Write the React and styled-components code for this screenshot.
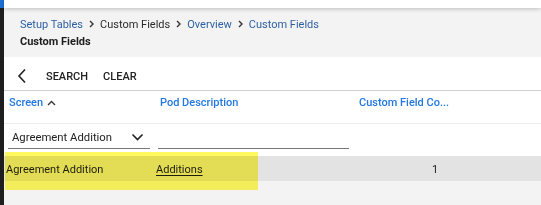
import React from "react";
import styled, { createGlobalStyle } from "styled-components";

const GlobalStyle = createGlobalStyle`
  html, body {
    margin: 0;
    padding: 0;
    background: #f3f3f3;
    font-family: Roboto, "Liberation Sans", sans-serif;
    font-size: 12px;
    color: #222;
  }
  #root { height: 205px; overflow: hidden; }
`;

const Shell = styled.div`
  display: flex;
  height: 205px;
`;

const Rail = styled.div`
  width: 4px;
  flex-shrink: 0;
  background: linear-gradient(#1f6fd6 0 8px, #1e1e1e 8px);
`;

const Main = styled.div`
  flex: 1;
  display: flex;
  flex-direction: column;
  min-width: 0;
`;

const TopBar = styled.div`
  height: 8px;
  background: #fff;
  box-shadow: 0 1px 4px rgba(0, 0, 0, 0.22);
  position: relative;
  z-index: 1;
`;

const Header = styled.div`
  height: 49px;
  padding: 10px 0 0 16px;
  box-sizing: border-box;
  background: #f3f3f3;
`;

const Crumbs = styled.div`
  display: flex;
  align-items: center;
  gap: 6px;
  font-size: 11px;
  line-height: 14px;
`;

const Crumb = styled.span`
  color: ${(p) => (p.$link ? "#2d5fa3" : "#2b2b2b")};
`;

const Sep = styled.svg`
  width: 5px;
  height: 8px;
  margin-top: -3px;
`;

const Title = styled.div`
  margin-top: 3px;
  font-weight: 700;
  font-size: 11px;
  color: #1c1c1c;
`;

const Panel = styled.div`
  background: #fff;
`;

const Toolbar = styled.div`
  height: 34px;
  display: flex;
  align-items: center;
  gap: 15px;
  padding: 5px 0 0 12px;
  box-sizing: border-box;
  border-bottom: 1px solid #cfcfcf;
`;

const Back = styled.svg`
  width: 12px;
  height: 16px;
  margin-right: 3px;
`;

const ToolButton = styled.span`
  font-size: 11px;
  font-weight: 500;
  color: #222;
`;

const Row = styled.div`
  display: grid;
  grid-template-columns: 152px 199px 1fr;
  align-items: ${(p) => p.$align || "center"};
  height: ${(p) => p.$h}px;
  box-sizing: border-box;
  background: ${(p) => p.$bg || "#fff"};
  border-bottom: ${(p) => (p.$line ? "1px solid #ececec" : "none")};
  padding-top: ${(p) => p.$pt || 0}px;
`;

const HeadCell = styled.div`
  color: #2177e3;
  font-weight: 500;
  font-size: 11px;
  padding-left: ${(p) => p.$pl}px;
  display: flex;
  align-items: center;
  gap: 4px;
`;

const Select = styled.div`
  margin: 0 6px 0 4px;
  height: 22px;
  display: flex;
  align-items: center;
  justify-content: space-between;
  padding: 0 6px 0 4px;
  border-bottom: 1px solid #777;
  font-size: 11.3px;
  color: #222;
`;

const Input = styled.div`
  margin: 0 6px 0 2px;
  height: 22px;
  border-bottom: 1px solid #777;
`;

const Gap = styled.div`
  height: 4px;
  background: #fff;
`;

const DataWrap = styled.div`
  position: relative;
`;

const Cell = styled.div`
  font-size: 11px;
  color: #1e1e1e;
  padding: 1px 0 0 ${(p) => p.$pl || 0}px;
  text-decoration: ${(p) => (p.$u ? "underline" : "none")};
  text-underline-offset: 2px;
`;

const Highlight = styled.div`
  position: absolute;
  left: 1px;
  top: -4px;
  width: 253px;
  height: 38px;
  background: #fff95f;
  mix-blend-mode: multiply;
  pointer-events: none;
`;

const Chevron = () => (
  <Sep viewBox="0 0 5 8">
    <path d="M1 1 L4 4 L1 7" fill="none" stroke="#333" strokeWidth="1.4" />
  </Sep>
);

export default function App() {
  return (
    <>
      <GlobalStyle />
      <Shell>
        <Rail />
        <Main>
          <TopBar />
          <Header>
            <Crumbs>
              <Crumb $link>Setup Tables</Crumb>
              <Chevron />
              <Crumb>Custom Fields</Crumb>
              <Chevron />
              <Crumb $link>Overview</Crumb>
              <Chevron />
              <Crumb $link>Custom Fields</Crumb>
            </Crumbs>
            <Title>Custom Fields</Title>
          </Header>
          <Panel>
            <Toolbar>
              <Back viewBox="0 0 12 16">
                <path d="M9 1.5 L3 8 L9 14.5" fill="none" stroke="#222" strokeWidth="1.6" />
              </Back>
              <ToolButton>SEARCH</ToolButton>
              <ToolButton>CLEAR</ToolButton>
            </Toolbar>
            <Row $h={33} $line $align="start" $pt={5}>
              <HeadCell $pl={5}>
                Screen
                <svg width="9" height="6" viewBox="0 0 9 6">
                  <path d="M1 5 L4.5 1.5 L8 5" fill="none" stroke="#333" strokeWidth="1.3" />
                </svg>
              </HeadCell>
              <HeadCell $pl={4}>Pod Description</HeadCell>
              <HeadCell $pl={4}>Custom Field Co...</HeadCell>
            </Row>
            <Row $h={28} $align="start" $pt={2}>
              <Select>
                Agreement Addition
                <svg width="13" height="8" viewBox="0 0 13 8">
                  <path d="M1.5 1.5 L6.5 6.5 L11.5 1.5" fill="none" stroke="#222" strokeWidth="1.6" />
                </svg>
              </Select>
              <Input />
              <div />
            </Row>
            <Gap />
          </Panel>
          <DataWrap>
            <Row $h={25} $bg="#e3e3e3">
              <Cell $pl={2}>Agreement Addition</Cell>
              <Cell>
                <Cell as="span" $u>Additions</Cell>
              </Cell>
              <Cell $pl={77}>1</Cell>
            </Row>
            <Highlight />
          </DataWrap>
        </Main>
      </Shell>
    </>
  );
}
